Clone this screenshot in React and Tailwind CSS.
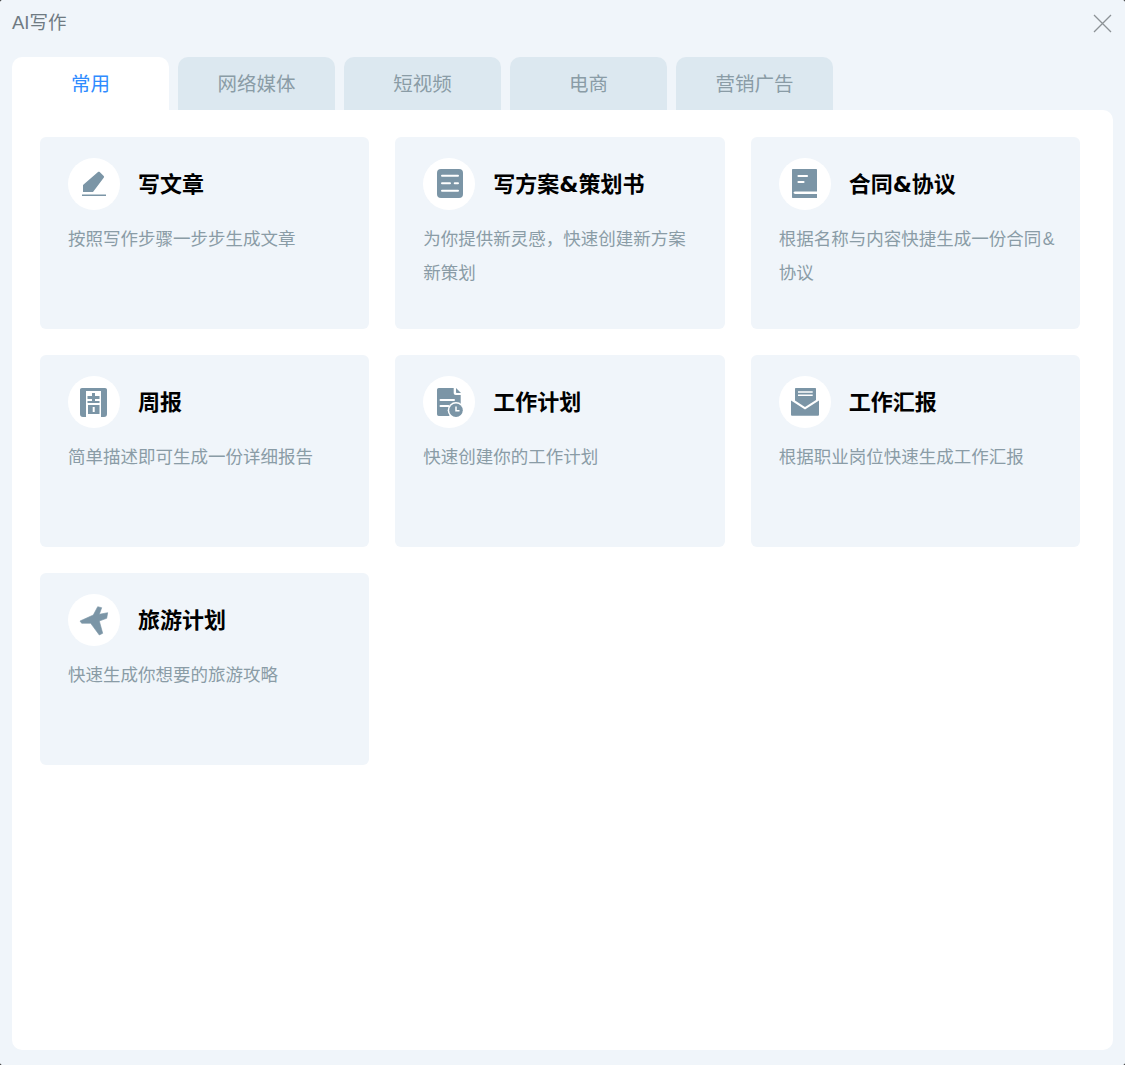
const cards = [
  { title: "写文章", desc: "按照写作步骤一步步生成文章", icon: "pen" },
  { title: "写方案&策划书", desc: "为你提供新灵感，快速创建新方案新策划", icon: "doc" },
  { title: "合同&协议", desc: "根据名称与内容快捷生成一份合同&协议", icon: "book" },
  { title: "周报", desc: "简单描述即可生成一份详细报告", icon: "week" },
  { title: "工作计划", desc: "快速创建你的工作计划", icon: "plan" },
  { title: "工作汇报", desc: "根据职业岗位快速生成工作汇报", icon: "mail" },
  { title: "旅游计划", desc: "快速生成你想要的旅游攻略", icon: "plane" },
];

const tabs = ["常用", "网络媒体", "短视频", "电商", "营销广告"];

function CardIcon({ name }) {
  const c = "#7b95a6";
  return (
    <svg width="52" height="52" viewBox="0 0 52 52" fill="none">
      {name === "pen" && (
        <>
          <path d="M15 34v-7L30 14c.6-.5 1.200-.5 1.700 0l4 4c.5.5.5 1.200 0 1.700L25 34z" fill={c} />
          <rect x="14" y="36.500" width="24" height="1.500" fill={c} />
        </>
      )}
      {name === "doc" && (
        <>
          <rect x="14" y="11" width="26" height="29" rx="4" fill={c} />
          <path d="M19 17.700h16M19 32.700h16M19 25.300h8M31.700 25.300h3.300" stroke="#fff" strokeWidth="2" strokeLinecap="round" />
        </>
      )}
      {name === "book" && (
        <>
          <path d="M13 12c0-.6.4-1 1-1h23c.6 0 1 .4 1 1v21.500H17c-1.500 0-2.500.6-2.500 1.200s1 1.300 2.500 1.300h21v4H14c-.6 0-1-.4-1-1z" fill={c} />
          <path d="M19.500 18h8.500M19.500 24h5" stroke="#fff" strokeWidth="2.200" strokeLinecap="round" />
        </>
      )}
      {name === "week" && (
        <>
          <path d="M14 12h23c1.300 0 2 .7 2 2v24c0 2-1 3-3 3h-3V15H18v26h-3c-2 0-3-1-3-3V14c0-1.300.7-2 2-2z" fill={c} />
          <path d="M24 17h3v3h4.500v3H27v2h4.500v2h-12v-2H24v-2h-4.500v-3H24z" fill={c} />
          <path fillRule="evenodd" clipRule="evenodd" d="M20 29h11.500v9H20zM24.700 31v5h2v-5z" fill={c} />
        </>
      )}
      {name === "plan" && (
        <>
          <path d="M15.700 12h15v5c0 1.200.8 2 2 2h5v9H14V14c0-1.200.7-2 1.700-2z" fill={c} />
          <path d="M14 28h24l-12 12H15.700c-1 0-1.700-.8-1.700-2z" fill={c} />
          <path d="M33 12l5 5h-4c-.6 0-1-.4-1-1z" fill={c} />
          <path d="M17.500 24h13.500M17.500 30h8" stroke="#fff" strokeWidth="2" strokeLinecap="round" />
          <circle cx="33" cy="34.300" r="8.300" fill="#fff" />
          <circle cx="33" cy="34.300" r="6.800" fill={c} />
          <path d="M33 30.500v4.300h3.500" stroke="#fff" strokeWidth="1.500" />
        </>
      )}
      {name === "mail" && (
        <>
          <path d="M16 13c0-.6.400-1 1-1h19c.6 0 1 .4 1 1v11l-11 7-10-6.500z" fill={c} />
          <path d="M12 24.500l14 9 14-9v14c0 .8-.5 1.300-1.300 1.300H13.300c-.8 0-1.300-.5-1.300-1.300z" fill={c} />
          <path d="M19 16h14.700M19 19.300h14.700" stroke="#fff" strokeWidth="1.500" />
        </>
      )}
      {name === "plane" && (
        <path d="M29.700 12.700l4 1-2.400 6.600 8.400-1.600-1 5.600-7.400 2.700 3.400 12.300-3.400 1.700-8.600-11.700h-9L12 27l13.300-6z" fill={c} stroke={c} strokeWidth="0.600" strokeLinejoin="round" />
      )}
    </svg>
  );
}

// the & in the reference's title font is wider than Liberation's
function Title({ text }) {
  const parts = text.split("&");
  return (
    <h3 className="text-[22px] font-bold text-black leading-[50px] pt-[2px]">
      {parts[0]}
      {parts.length > 1 && <span className="font-['DejaVu_Sans']">&amp;</span>}
      {parts[1]}
    </h3>
  );
}

function Desc({ text }) {
  const parts = text.split("&");
  return (
    <p className="mt-[12px] w-[279px] text-[17.5px] leading-[34px] text-[#8a9ca6]">
      {parts[0]}
      {parts.length > 1 && <span className="px-[1.5px]">&amp;</span>}
      {parts[1]}
    </p>
  );
}

function Card({ item }) {
  return (
    <div className="h-[192px] rounded-[6px] bg-[#f0f5fa] pt-[21px] px-[28px]">
      <div className="flex items-center gap-[18px]">
        <div className="w-[52px] h-[52px] rounded-full bg-white shrink-0">
          <CardIcon name={item.icon} />
        </div>
        <Title text={item.title} />
      </div>
      <Desc text={item.desc} />
    </div>
  );
}

export default function App() {
  return (
    <div className="w-[1125px] h-[1065px] bg-black overflow-hidden" style={{ fontFamily: '"Liberation Sans", "Noto Sans CJK SC", sans-serif' }}>
      <div className="h-full bg-[#f0f5fa] rounded-[2px] px-[12px] flex flex-col">
        <div className="h-[57px] flex items-start justify-between shrink-0">
          <span className="mt-[10px] text-[18.500px] leading-[26px] text-[#6f7a82]">AI写作</span>
          <svg className="mt-[14px] mr-[1px]" width="19" height="19" viewBox="0 0 19 19" fill="none">
            <path d="M1 1l17 17M18 1L1 18" stroke="#8c9296" strokeWidth="1.300" />
          </svg>
        </div>
        <div className="flex gap-[9px] h-[53px] shrink-0">
          {tabs.map((t, i) => (
            <div
              key={t}
              className={
                i === 0
                  ? "w-[157px] rounded-t-[10px] bg-white text-[#2f8cff] text-[19.5px] pt-[10px] leading-[34px] text-center"
                  : "w-[157px] rounded-t-[10px] bg-[#dce8f0] text-[#8a9ca6] text-[19.5px] pt-[10px] leading-[34px] text-center"
              }
            >
              {t}
            </div>
          ))}
        </div>
        <div className="w-[1101px] h-[940px] bg-white rounded-b-[10px] rounded-tr-[10px] pt-[27px] pl-[28px] pr-[33px]">
          <div className="grid grid-cols-3 gap-[26px]">
            {cards.map((item) => (
              <Card key={item.title} item={item} />
            ))}
          </div>
        </div>
      </div>
    </div>
  );
}
